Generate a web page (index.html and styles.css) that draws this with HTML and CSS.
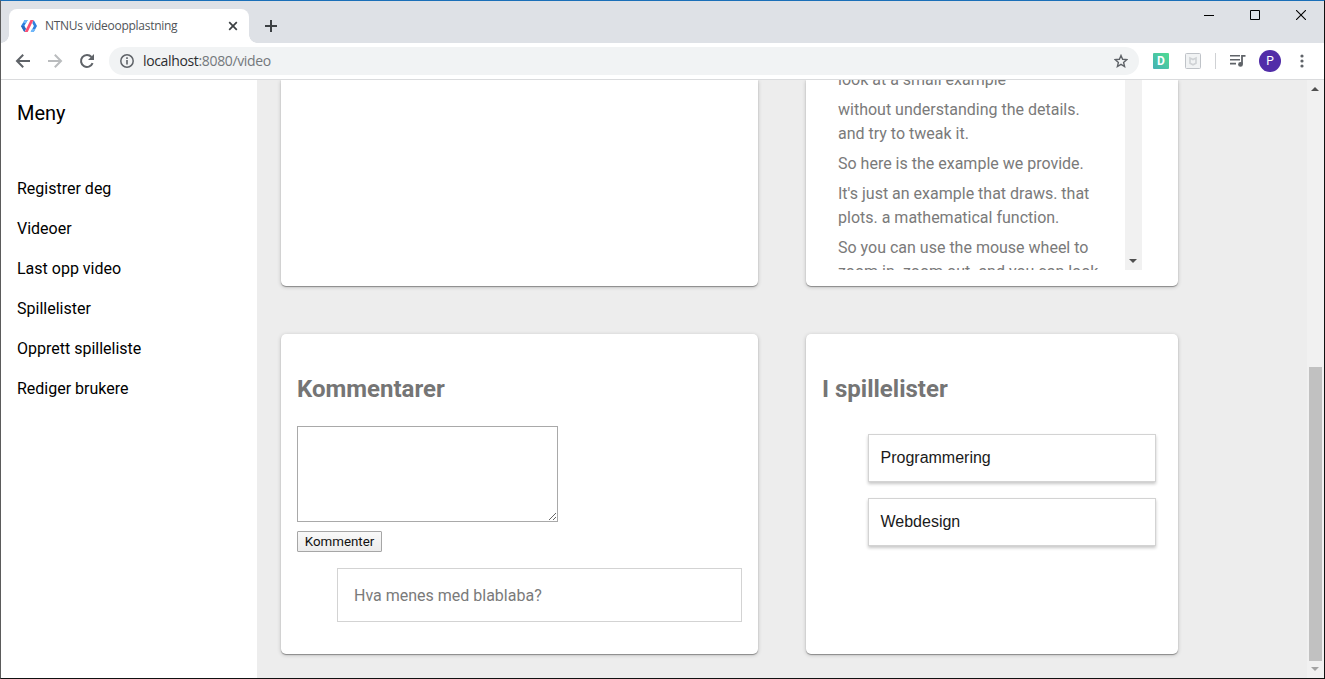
FILE: index.html
```html
<!DOCTYPE html>
<html lang="no">
<head>
<meta charset="utf-8">
<title>NTNUs videoopplastning</title>
<link rel="stylesheet" href="styles.css">
</head>
<body>
<div class="window">
  <header class="tabstrip">
    <div class="tab">
      <svg class="favicon" width="16" height="12" viewBox="0 0 16 12">
        <path d="M3.700 0h3L3.300 6l1.600 2.700L3.300 12 0 6z" fill="#2f80de"/>
        <path d="M3.700 0h3L5 3H2z" fill="#6fb8fa"/>
        <path d="M0 6h3.300l1.600 2.700L3.300 12z" fill="#2a6cc0"/>
        <path d="M12.700 0L16 6l-3.300 6h-3l3.200-6-1.600-3z" fill="#2f80de"/>
        <path d="M11 9h3.300l-1.600 3h-3z" fill="#6fb8fa"/>
        <path d="M9.500 0h3L6.700 12h-3z" fill="#fb4d72"/>
      </svg>
      <span class="tab-title">NTNUs videoopplastning</span>
      <svg class="tab-close" width="10" height="10" viewBox="0 0 10 10"><path d="M1.200 1.200l7.600 7.600M8.800 1.200L1.200 8.800" stroke="#3c4043" stroke-width="1.700"/></svg>
    </div>
    <svg class="new-tab" width="14" height="14" viewBox="0 0 14 14"><path d="M7 1v12M1 7h12" stroke="#3c4043" stroke-width="2"/></svg>
    <div class="window-buttons">
      <svg width="10" height="10" viewBox="0 0 10 10"><path d="M0 5.500h10" stroke="#000"/></svg>
      <svg width="10" height="10" viewBox="0 0 10 10"><path d="M.5.5h9v9h-9z" fill="none" stroke="#000"/></svg>
      <svg width="10" height="10" viewBox="0 0 10 10"><path d="M0 0l10 10M10 0L0 10" stroke="#000" stroke-width="1.100"/></svg>
    </div>
  </header>

  <div class="toolbar">
    <svg class="nav-icon" width="16" height="16" viewBox="0 0 16 16"><path d="M15 8H2.500M8.200 1.800L2 8l6.200 6.200" fill="none" stroke="#5f6368" stroke-width="2"/></svg>
    <svg class="nav-icon" width="16" height="16" viewBox="0 0 16 16"><path d="M1 8h12.500M7.800 1.800L14 8l-6.200 6.200" fill="none" stroke="#babcbe" stroke-width="2"/></svg>
    <svg class="nav-icon" width="16" height="16" viewBox="0 0 16 16"><path d="M13.600 10.200A6 6 0 1 1 12.500 4" fill="none" stroke="#5f6368" stroke-width="2"/><path d="M15 1v6H9z" fill="#5f6368"/></svg>
    <div class="address">
      <svg width="14" height="14" viewBox="0 0 14 14"><circle cx="7" cy="7" r="6.200" fill="none" stroke="#5f6368" stroke-width="1.500"/><path d="M7 6v4.500M7 3.300v1.600" stroke="#5f6368" stroke-width="1.600"/></svg>
      <span class="url"><b>localhost</b>:8080/video</span>
      <svg class="star" width="14" height="14" viewBox="0 0 14 14"><path d="M7 1.500l1.600 3.800 4.200.35-3.200 2.750 1 4.100L7 10.300l-3.600 2.200 1-4.100L1.200 5.650l4.200-.35z" fill="none" stroke="#5f6368" stroke-width="1.400"/></svg>
    </div>
    <span class="ext-d">D</span>
    <svg class="ext-shield" width="16" height="16" viewBox="0 0 16 16"><rect x=".5" y=".5" width="15" height="15" rx="1" fill="#f1f3f4" stroke="#bfc3c8"/><path d="M5 5v5.300l3 1.500 3-1.500V5L8 6.500z" fill="none" stroke="#cfd2d5" stroke-width="1.600"/></svg>
    <span class="divider"></span>
    <svg class="queue" width="17" height="14" viewBox="0 0 17 14"><path d="M1 1.800h10M1 5.700h10M1 9.600h6" stroke="#5f6368" stroke-width="1.600"/><path d="M13 10V1.800h3.500" fill="none" stroke="#5f6368" stroke-width="1.800"/><circle cx="11.500" cy="10.400" r="2.400" fill="#5f6368"/></svg>
    <span class="avatar">P</span>
    <svg class="more" width="4" height="14" viewBox="0 0 4 14"><circle cx="2" cy="2" r="1.600" fill="#5f6368"/><circle cx="2" cy="7" r="1.600" fill="#5f6368"/><circle cx="2" cy="12" r="1.600" fill="#5f6368"/></svg>
  </div>

  <div class="page">
    <nav class="sidebar">
      <div class="menu-title">Meny</div>
      <a>Registrer deg</a>
      <a>Videoer</a>
      <a>Last opp video</a>
      <a>Spillelister</a>
      <a>Opprett spilleliste</a>
      <a>Rediger brukere</a>
    </nav>

    <main class="content">
      <section class="card card-top"></section>
      <section class="card card-top">
        <div class="transcript">
          <div class="cues">
            <p>look at a small example</p>
            <p>without understanding the details.<br>and try to tweak it.</p>
            <p>So here is the example we provide.</p>
            <p>It's just an example that draws. that<br>plots. a mathematical function.</p>
            <p>So you can use the mouse wheel to<br>zoom in. zoom out. and you can look</p>
          </div>
          <div class="cue-scroll"><svg width="8" height="4" viewBox="0 0 8 4"><path d="M0 0h8L4 4z" fill="#505050"/></svg></div>
        </div>
      </section>
      <section class="card">
        <h2>Kommentarer</h2>
        <textarea class="comment-input"></textarea>
        <button class="comment-button">Kommenter</button>
        <div class="comment">Hva menes med blablaba?</div>
      </section>
      <section class="card">
        <h2>I spillelister</h2>
        <div class="playlists">
          <div class="playlist">Programmering</div>
          <div class="playlist">Webdesign</div>
        </div>
      </section>
    </main>

    <div class="scrollbar">
      <svg width="8" height="4" viewBox="0 0 8 4"><path d="M0 4h8L4 0z" fill="#505050"/></svg>
      <div class="thumb"></div>
      <svg width="8" height="4" viewBox="0 0 8 4"><path d="M0 0h8L4 4z" fill="#a3a3a3"/></svg>
    </div>
  </div>
</div>
</body>
</html>
```
FILE: styles.css
```css
* { box-sizing: border-box; }
body { margin: 0; overflow: hidden; }
svg { display: block; flex: none; }

.window {
  width: 1325px;
  height: 679px;
  display: flex;
  flex-direction: column;
  border: 1px solid #111;
  border-top-color: #1a6fb8;
  border-left-color: #5b5b5b;
  background: #fff;
}

/* Tab strip */
.tabstrip {
  height: 42px;
  flex: none;
  display: flex;
  align-items: flex-end;
  background: #dee1e6;
}
.tab {
  position: relative;
  width: 240px;
  height: 34px;
  margin-left: 8px;
  padding: 0 11px 0 12px;
  display: flex;
  align-items: center;
  background: #fff;
  border-radius: 8px 8px 0 0;
}
.tab::before, .tab::after {
  content: "";
  position: absolute;
  bottom: 0;
  width: 8px;
  height: 8px;
}
.tab::before { left: -8px; background: radial-gradient(circle at 0 0, transparent 7.5px, #fff 8px); }
.tab::after { right: -8px; background: radial-gradient(circle at 100% 0, transparent 7.5px, #fff 8px); }
.tab-title {
  margin-left: 8px;
  font: 12px/16px "Open Sans", sans-serif;
  letter-spacing: -0.28px;
  color: #505458;
  white-space: nowrap;
}
.tab-close { margin-left: auto; }
.new-tab { margin: 0 0 10px 15px; }
.window-buttons {
  display: flex;
  gap: 36px;
  align-self: flex-start;
  margin: 9px 18px 0 auto;
}

/* Toolbar */
.toolbar {
  height: 37px;
  flex: none;
  display: flex;
  align-items: center;
  padding-left: 14px;
  background: #fff;
  border-bottom: 1px solid #dadbdd;
}
.nav-icon { margin-right: 16px; }
.address {
  width: 1030px;
  height: 28px;
  margin-left: -2px;
  padding: 0 11px;
  display: flex;
  align-items: center;
  background: #f1f3f4;
  border-radius: 14px;
}
.url {
  margin-left: 9px;
  font: 14px/20px "Open Sans", sans-serif;
  letter-spacing: -0.35px;
  color: #74787c;
}
.url b { font-weight: 400; color: #2c2d30; }
.star { margin-left: auto; }
.ext-d {
  width: 16px;
  height: 16px;
  margin-left: 14px;
  border-radius: 1px;
  background: linear-gradient(45deg, #45b0b5, #4fdc92);
  color: #fff;
  font: bold 12px/16px Roboto, sans-serif;
  text-align: center;
}
.ext-shield { margin-left: 16px; }
.divider { width: 1px; height: 16px; margin-left: 14px; background: #cfd1d4; }
.queue { margin-left: 13px; }
.avatar {
  width: 22px;
  height: 22px;
  margin-left: 13px;
  border-radius: 50%;
  background: #512da8;
  color: #fff;
  font: 12px/22px Roboto, sans-serif;
  text-align: center;
}
.more { margin-left: 19px; }

/* Page */
.page {
  height: 598px;
  display: flex;
  background: #ededed;
  font-family: Roboto, sans-serif;
  font-size: 16px;
  line-height: 24px;
}
.sidebar {
  width: 256px;
  padding: 0 16px;
  background: #fff;
  color: #000;
}
.menu-title {
  height: 89px;
  font-size: 20px;
  line-height: 66px;
}
.sidebar a { display: block; line-height: 40px; }

.content {
  width: 1050px;
  padding-left: 24px;
  display: grid;
  grid-template-columns: 477px 372px;
  grid-template-rows: 206px 320px;
  gap: 48px;
  overflow: hidden;
}
.card {
  padding: 16px;
  background: #fff;
  border-radius: 5px;
  color: #7a7a7a;
  box-shadow: 0 1px 1px rgba(0, 0, 0, .34), 0 1px 4px rgba(0, 0, 0, .2);
}
.card-top { padding-top: 0; border-radius: 0 0 5px 5px; }
.card h2 {
  margin: 21px 0 19px;
  font-size: 24px;
  line-height: 36px;
  font-weight: 700;
  color: #757575;
}

.transcript {
  width: 320px;
  height: 190px;
  display: flex;
  overflow: hidden;
}
.cues { width: 303px; padding-left: 16px; margin-top: -12px; white-space: nowrap; }
.cues p { margin: 0 0 6px; }
.cue-scroll {
  width: 17px;
  padding: 0 5px 7px 4px;
  display: flex;
  align-items: flex-end;
  background: #f1f1f1;
}

.comment-input {
  display: block;
  width: 261px;
  height: 96px;
  margin: 0;
  border: 1px solid #a9a9a9;
  border-radius: 0;
}
.comment-button {
  display: block;
  width: 85px;
  height: 21px;
  margin: 9px 0 16px;
  padding: 0;
  border: 1px solid #a6a6a6;
  border-radius: 1px;
  background: linear-gradient(#f9f9f9, #ececec);
  color: #111;
  font: 13.33px/19px Roboto, sans-serif;
}
.comment {
  height: 54px;
  margin-left: 40px;
  padding: 15px 16px 13px;
  border: 1px solid #d3d3d3;
}

.playlists {
  display: flex;
  flex-direction: column;
  gap: 16px;
  margin: 27px 6px 0 46px;
}
.playlist {
  height: 48px;
  padding-left: 11.5px;
  border: 1px solid #d3d3d3;
  box-shadow: 0 2px 3px rgba(0, 0, 0, .22);
  color: #1a1a1a;
  font: 16px/45px "Liberation Sans", Arial, sans-serif;
}

.scrollbar {
  width: 17px;
  padding: 7px 5px 7px 4px;
  display: flex;
  flex-direction: column;
  background: #f1f1f1;
}
.thumb { width: 13px; height: 294px; margin: auto 0 6px -2px; background: #c1c1c1; }
```
